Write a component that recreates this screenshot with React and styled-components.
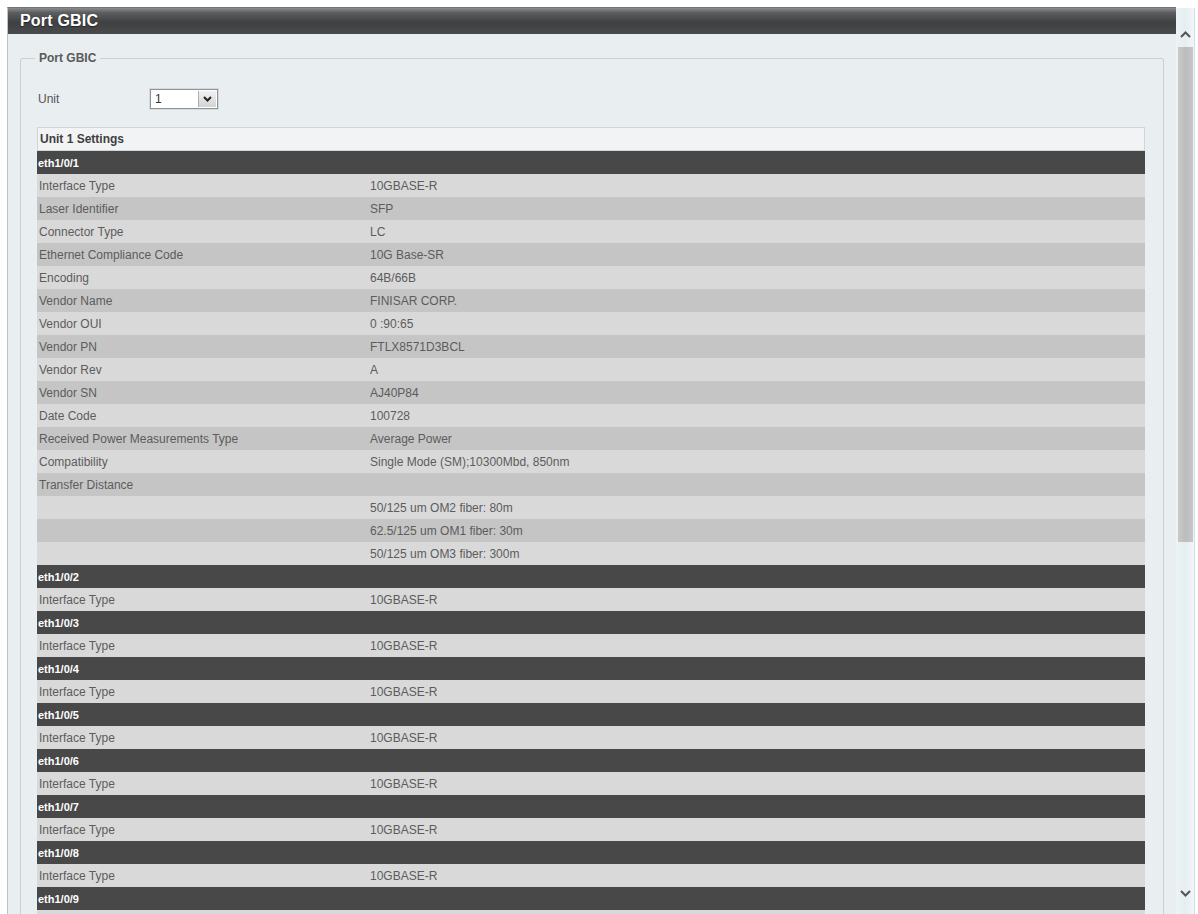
import React from "react";
import styled, { createGlobalStyle } from "styled-components";

const GlobalStyle = createGlobalStyle`
  html, body {
    margin: 0;
    padding: 0;
    background: #ffffff;
    overflow: hidden;
  }
  body {
    font-family: "Liberation Sans", Arial, sans-serif;
  }
`;

const Page = styled.div`
  display: flex;
  padding: 7px 0 0 7px;
  height: 907px;
  overflow: hidden;
`;

const Window = styled.div`
  width: 1168px;
  display: flex;
  flex-direction: column;
  background: #e9eef0;
  border-top: 1px solid #6f7479;
  border-left: 1px solid #b9c3c8;
`;

const TitleBar = styled.div`
  height: 26px;
  display: flex;
  align-items: center;
  padding-left: 12px;
  background: linear-gradient(#8a8c8e 0%, #5b5d5f 18%, #3f4042 55%, #4a4b4d 100%);
  color: #ffffff;
  font-size: 16px;
  font-weight: bold;
  letter-spacing: 0.2px;
  text-shadow: 0 1px 1px #222;
`;

const Body = styled.div`
  padding: 17px 12px 0 12px;
  flex: 1;
  overflow: hidden;
`;

const Fieldset = styled.fieldset`
  margin: 0;
  padding: 21px 16px 0 16px;
  border: 1px solid #c9d1d5;
  border-radius: 2px;
  height: 900px;
`;

const Legend = styled.legend`
  padding: 0 4px;
  margin-left: -2px;
  font-size: 12px;
  font-weight: bold;
  color: #5a5a5a;
`;

const UnitRow = styled.div`
  display: flex;
  align-items: center;
  height: 26px;
  margin-bottom: 15px;
  padding-left: 1px;
`;

const UnitLabel = styled.span`
  width: 112px;
  font-size: 12px;
  color: #555;
`;

const SelectBox = styled.div`
  display: flex;
  align-items: center;
  width: 66px;
  height: 18px;
  border: 1px solid #8d9499;
  background: #ffffff;
  box-shadow: 0 0 0 1px #d4dadd;
`;

const SelectValue = styled.span`
  flex: 1;
  font-size: 12px;
  color: #333;
  padding-left: 4px;
`;

const SelectArrow = styled.span`
  width: 17px;
  height: 16px;
  margin-right: 1px;
  display: flex;
  align-items: center;
  justify-content: center;
  background: linear-gradient(#f2f2f2, #d3d3d3);
  border-left: 1px solid #a9aeb2;
`;

const Table = styled.div`
  width: 1108px;
  display: flex;
  flex-direction: column;
`;

const Caption = styled.div`
  height: 22px;
  display: flex;
  align-items: center;
  padding-left: 2px;
  border: 1px solid #d0d5d8;
  background: #f1f3f4;
  font-size: 12px;
  font-weight: bold;
  color: #3f3f3f;
`;

const PortHeader = styled.div`
  height: 23px;
  display: flex;
  align-items: center;
  padding-left: 1px;
  background: #484848;
  color: #ffffff;
  font-size: 11px;
  font-weight: bold;
`;

const Row = styled.div`
  height: 23px;
  display: flex;
  align-items: center;
  background: ${(p) => (p.$dark ? "#c5c5c5" : "#d9d9d9")};
  font-size: 12px;
  color: #5c5c5c;
`;

const Label = styled.span`
  width: 331px;
  padding-left: 2px;
  white-space: nowrap;
`;

const Value = styled.span`
  white-space: nowrap;
`;

const Scrollbar = styled.div`
  width: 18px;
  height: 906px;
  margin-top: 1px;
  display: flex;
  flex-direction: column;
  background: linear-gradient(90deg, #eef4f6, #e4eef1 50%, #f2f6f7);
  border-right: 1px solid #d7dde0;
`;

const ScrollButton = styled.div`
  height: 30px;
  display: flex;
  justify-content: center;
  align-items: ${(p) => (p.$down ? "center" : "flex-end")};
  padding-bottom: ${(p) => (p.$down ? "6px" : "2px")};
`;

const Thumb = styled.div`
  height: 495px;
  margin: 7px 1px 0 2px;
  background: linear-gradient(90deg, #c9c9c9, #bdbdbd 50%, #c6c6c6);
`;

const Track = styled.div`
  flex: 1;
`;

const Chevron = ({ up }) => (
  <svg width="11" height="7" viewBox="0 0 11 7">
    <path
      d={up ? "M1 6 L5.5 1.5 L10 6" : "M1 1 L5.5 5.5 L10 1"}
      fill="none"
      stroke="#555"
      strokeWidth="2"
    />
  </svg>
);

const details = [
  ["Interface Type", "10GBASE-R"],
  ["Laser Identifier", "SFP"],
  ["Connector Type", "LC"],
  ["Ethernet Compliance Code", "10G Base-SR"],
  ["Encoding", "64B/66B"],
  ["Vendor Name", "FINISAR CORP."],
  ["Vendor OUI", "0 :90:65"],
  ["Vendor PN", "FTLX8571D3BCL"],
  ["Vendor Rev", "A"],
  ["Vendor SN", "AJ40P84"],
  ["Date Code", "100728"],
  ["Received Power Measurements Type", "Average Power"],
  ["Compatibility", "Single Mode (SM);10300Mbd, 850nm"],
  ["Transfer Distance", ""],
  ["", "50/125 um OM2 fiber: 80m"],
  ["", "62.5/125 um OM1 fiber: 30m"],
  ["", "50/125 um OM3 fiber: 300m"],
];

const ports = [
  { name: "eth1/0/1", rows: details },
  ...[2, 3, 4, 5, 6, 7, 8, 9].map((n) => ({
    name: `eth1/0/${n}`,
    rows: [["Interface Type", "10GBASE-R"]],
  })),
];

const App = () => (
  <>
    <GlobalStyle />
    <Page>
      <Window>
        <TitleBar>Port GBIC</TitleBar>
        <Body>
          <Fieldset>
            <Legend>Port GBIC</Legend>
            <UnitRow>
              <UnitLabel>Unit</UnitLabel>
              <SelectBox>
                <SelectValue>1</SelectValue>
                <SelectArrow>
                  <svg width="9" height="6" viewBox="0 0 9 6">
                    <path d="M1 1 L4.5 4.5 L8 1" fill="none" stroke="#222" strokeWidth="2" />
                  </svg>
                </SelectArrow>
              </SelectBox>
            </UnitRow>
            <Table>
              <Caption>Unit 1 Settings</Caption>
              {ports.map((port) => (
                <React.Fragment key={port.name}>
                  <PortHeader>{port.name}</PortHeader>
                  {port.rows.map(([label, value], i) => (
                    <Row key={i} $dark={i % 2 === 1}>
                      <Label>{label}</Label>
                      <Value>{value}</Value>
                    </Row>
                  ))}
                </React.Fragment>
              ))}
            </Table>
          </Fieldset>
        </Body>
      </Window>
      <Scrollbar>
        <ScrollButton>
          <Chevron up />
        </ScrollButton>
        <Thumb />
        <Track />
        <ScrollButton $down>
          <Chevron />
        </ScrollButton>
      </Scrollbar>
    </Page>
  </>
);

export default App;
